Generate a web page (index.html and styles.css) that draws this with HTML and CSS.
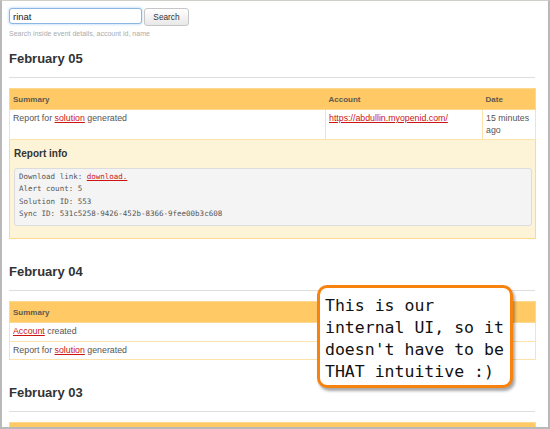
FILE: index.html
```html
<!DOCTYPE html>
<html>
<head>
<meta charset="utf-8">
<link rel="stylesheet" href="styles.css">
</head>
<body>
<div class="frame">
  <form class="search">
    <input class="search-input" type="text" value="rinat">
    <button class="search-btn" type="button">Search</button>
  </form>
  <div class="help">Search inside event details, account id, name</div>

  <h2 class="day">February 05</h2>
  <div class="rule"></div>
  <table class="events">
    <colgroup><col class="c-sum"><col class="c-acc"><col class="c-date"></colgroup>
    <thead><tr><th>Summary</th><th>Account</th><th>Date</th></tr></thead>
    <tbody>
      <tr><td>Report for <a href="#">solution</a> generated</td><td><a href="#">https://abdullin.myopenid.com/</a></td><td>15 minutes ago</td></tr>
      <tr class="details"><td colspan="3">
        <div class="details-title">Report info</div>
        <pre class="report">Download link: <a href="#">download.</a>
Alert count: 5
Solution ID: 553
Sync ID: 531c5258-9426-452b-8366-9fee00b3c608</pre>
      </td></tr>
    </tbody>
  </table>

  <h2 class="day day-next">February 04</h2>
  <div class="rule"></div>
  <table class="events">
    <colgroup><col class="c-sum"><col class="c-acc2"><col class="c-date2"></colgroup>
    <thead><tr><th>Summary</th><th></th><th></th></tr></thead>
    <tbody>
      <tr><td><a href="#">Account</a> created</td><td></td><td></td></tr>
      <tr><td>Report for <a href="#">solution</a> generated</td><td></td><td></td></tr>
    </tbody>
  </table>

  <h2 class="day day-next">February 03</h2>
  <div class="rule"></div>
  <table class="events">
    <colgroup><col class="c-sum"><col class="c-acc"><col class="c-date"></colgroup>
    <thead><tr><th>Summary</th><th>Account</th><th>Date</th></tr></thead>
  </table>

  <div class="callout">This is our<br>internal UI, so it<br>doesn't have to be<br>THAT intuitive :)</div>
</div>
</body>
</html>
```

FILE: styles.css
```css
html, body {
  margin: 0;
  padding: 0;
  background: #fff;
}
body {
  font-family: "Liberation Sans", Arial, sans-serif;
  color: #555;
}
.frame {
  position: relative;
  width: 550px;
  height: 429px;
  box-sizing: border-box;
  border-style: solid;
  border-color: #cfcfca #b9b9b9 #b9b9b9 #b9b9b9;
  border-width: 1px 2px 2px 2px;
  padding: 7px 13px 0 7px;
  overflow: hidden;
  background: #fff;
}
.search {
  display: flex;
  align-items: flex-start;
  gap: 2px;
  margin: 0;
}
.search-input {
  width: 133px;
  height: 16px;
  box-sizing: border-box;
  margin: 0;
  padding: 0 3px;
  border: 1px solid #8ab6e3;
  border-radius: 3px;
  box-shadow: 0 0 3px #a8cbf0;
  font: 9.5px "Liberation Sans", Arial, sans-serif;
  color: #222;
  outline: none;
}
.search-btn {
  width: 45px;
  height: 18px;
  box-sizing: border-box;
  margin: 0;
  padding: 0;
  border: 1px solid #c6c6c6;
  border-radius: 3px;
  background: linear-gradient(#ffffff, #e8e8e8);
  font: 8.3px "Liberation Sans", Arial, sans-serif;
  color: #333;
}
.help {
  margin-top: 3px;
  font-size: 7px;
  line-height: 9px;
  color: #ababab;
}
.day {
  margin: 13px 0 0;
  font-size: 13px;
  line-height: 16px;
  font-weight: bold;
  color: #333;
}
.day-next {
  margin-top: 25px;
}
.rule {
  margin-top: 10px;
  height: 1px;
  background: #dedede;
}
.events {
  margin-top: 10px;
  width: 526px;
  border-collapse: collapse;
  table-layout: fixed;
  border: 1px solid #fcd991;
  font-size: 8.8px;
  line-height: 11.5px;
}
.c-sum { width: 316px; }
.c-acc { width: 157px; }
.c-date { width: 53px; }
.c-acc2 { width: 120px; }
.c-date2 { width: 90px; }
.events th {
  background: #ffc966;
  text-align: left;
  font-weight: bold;
  font-size: 8px;
  line-height: 11px;
  color: #5e5a4e;
  padding: 5px 3px 4px;
  border-bottom: 1px solid #fcd991;
}
.events td {
  vertical-align: top;
  padding: 3px 3px 3px;
  border: 1px solid #fde2a9;
  color: #555;
}
.events a {
  color: #cc1414;
  text-decoration: underline;
}
.details td {
  background: #fdf4d7;
  padding: 8px 3px 12px 4px;
  border-color: #fcd991;
}
.details-title {
  font-size: 10px;
  line-height: 12px;
  font-weight: bold;
  color: #333;
}
.report {
  margin: 8px 0 0;
  padding: 2px 4px 5px;
  background: #f4f4f4;
  border: 1px solid #dcdcdc;
  border-radius: 3px;
  font-family: "DejaVu Sans Mono", "Liberation Mono", monospace;
  font-size: 7.5px;
  line-height: 12.3px;
  color: #555;
}
.report a {
  color: #cc1414;
}
.callout {
  position: absolute;
  left: 315px;
  top: 284px;
  width: 196px;
  height: 103px;
  box-sizing: border-box;
  padding: 7px 0 0 5px;
  border: 3px solid #f7820e;
  border-radius: 10px;
  background: #fff;
  box-shadow: 2px 3px 3px rgba(0, 0, 0, 0.35);
  font-family: "DejaVu Sans Mono", "Liberation Mono", monospace;
  font-size: 16.5px;
  line-height: 22px;
  color: #111;
  white-space: nowrap;
}
```
